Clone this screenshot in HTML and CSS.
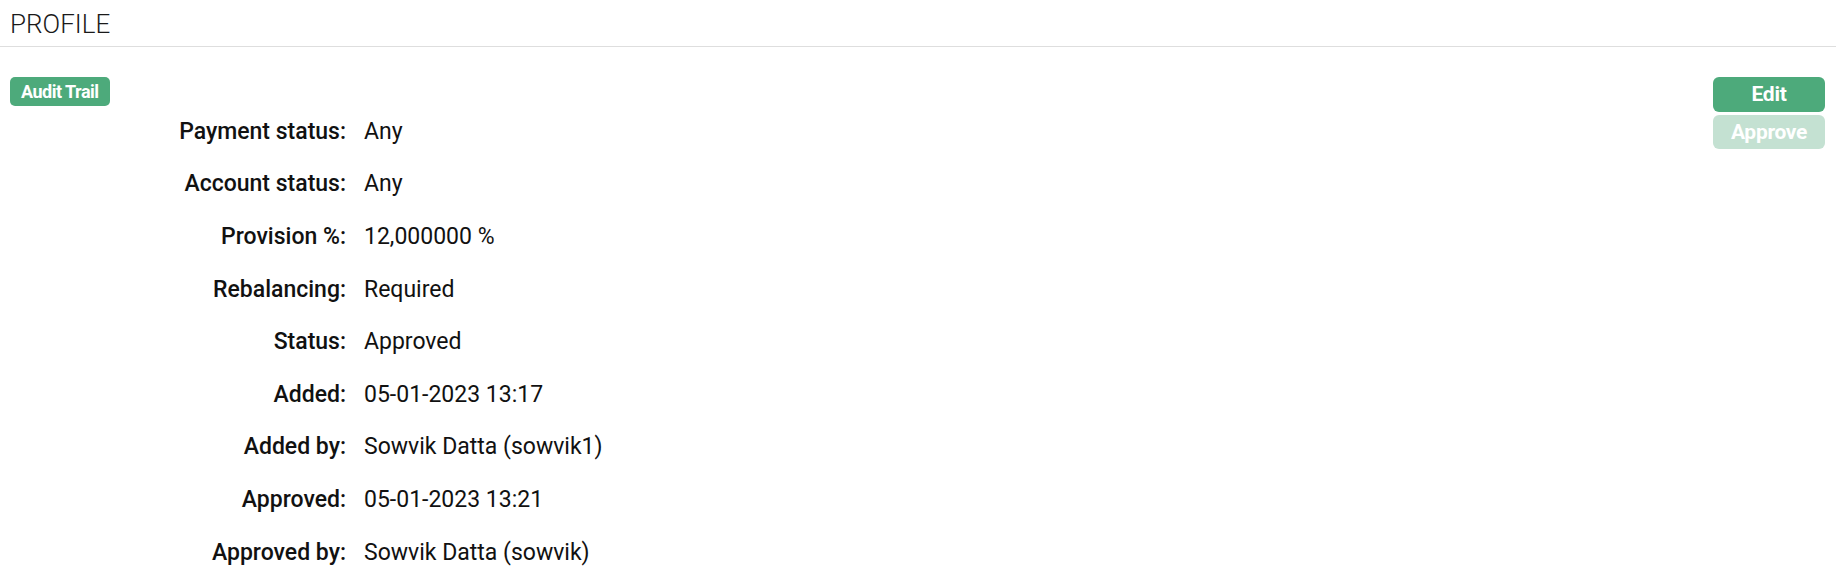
FILE: index.html
```html
<!DOCTYPE html>
<html lang="en">
<head>
	<meta charset="UTF-8">
	<title>Profile</title>
	<link rel="stylesheet" href="styles.css">
</head>
<body>
	<div class="head">PROFILE</div>
	<div class="content">
		<div class="side">
			<a class="badge" href="#">Audit Trail</a>
		</div>
		<dl class="details">
			<dt>Payment status:</dt><dd>Any</dd>
			<dt>Account status:</dt><dd>Any</dd>
			<dt>Provision %:</dt><dd>12,000000 %</dd>
			<dt>Rebalancing:</dt><dd>Required</dd>
			<dt>Status:</dt><dd>Approved</dd>
			<dt>Added:</dt><dd>05-01-2023 13:17</dd>
			<dt>Added by:</dt><dd>Sowvik Datta (sowvik1)</dd>
			<dt>Approved:</dt><dd>05-01-2023 13:21</dd>
			<dt>Approved by:</dt><dd>Sowvik Datta (sowvik)</dd>
		</dl>
		<div class="actions">
			<a class="btn" href="#">Edit</a>
			<a class="btn disabled" href="#">Approve</a>
		</div>
	</div>
</body>
</html>
```

FILE: styles.css
```css
html,body{overflow:hidden;}
body{margin:0;font-family:Roboto,"Noto Sans",sans-serif;color:#111;background:#fff;}
a{text-decoration:none;}

.head{height:46px;line-height:48px;padding-left:10px;font-size:26px;font-weight:300;color:#1a1a1a;border-bottom:1px solid #dedede;}

.content{display:flex;align-items:flex-start;padding:30px 11px 0 10px;}
.side{width:110px;}
.badge{display:inline-block;height:29px;line-height:29px;padding:0 11px;background-color:#4daa7b;color:#fff;font-size:18px;font-weight:700;border-radius:5px;letter-spacing:-0.5px;}

.details{flex:1;display:grid;grid-template-columns:226px auto;grid-auto-rows:52.6px;align-items:center;column-gap:18px;margin:28px 0 0;font-size:23px;}
.details dt{text-align:right;font-weight:500;}
.details dd{margin:0;}

.actions{display:flex;flex-direction:column;gap:3px;width:112px;}
.btn{display:block;height:35px;line-height:35px;text-align:center;background-color:#4daa7b;color:#fff;font-size:21px;font-weight:700;border-radius:6px;letter-spacing:-0.3px;}
.btn.disabled{height:34px;line-height:34px;background-color:#c4e1d2;}
```
